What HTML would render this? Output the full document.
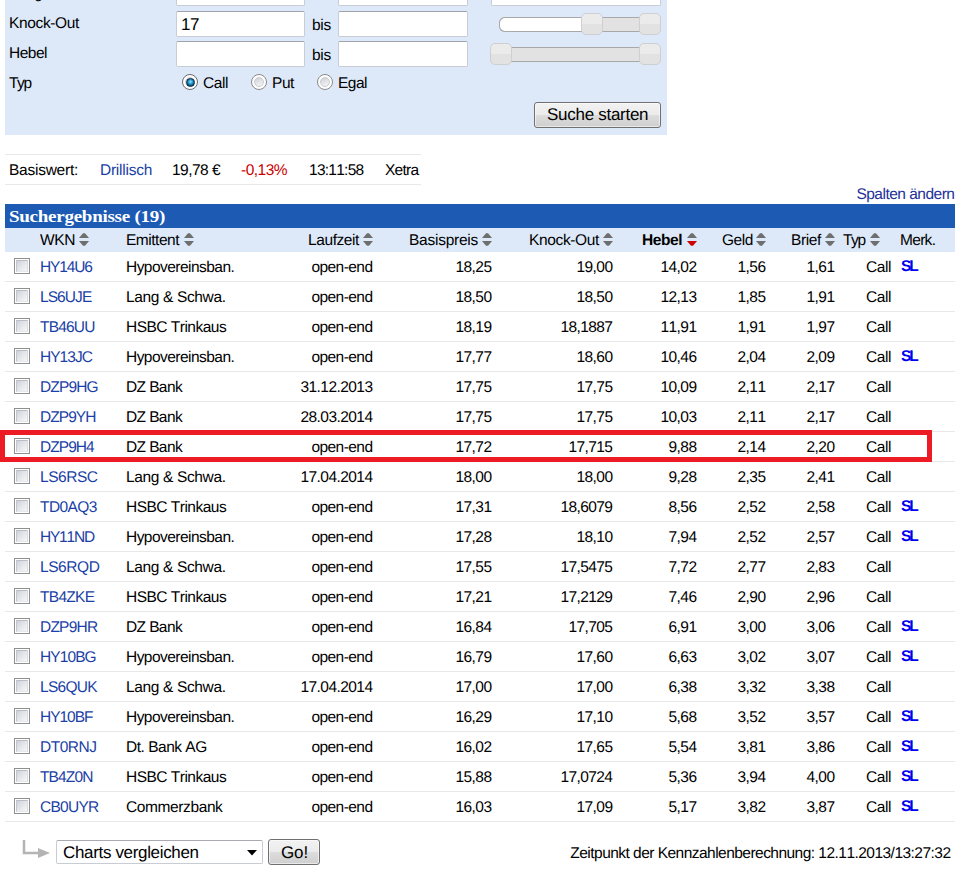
<!DOCTYPE html>
<html><head><meta charset="utf-8"><style>
*{margin:0;padding:0;box-sizing:border-box}
html,body{width:974px;height:887px;overflow:hidden;background:#fff}
body{position:relative;font-family:"Liberation Sans",sans-serif;font-size:15.5px;color:#000;font-kerning:none}
.t{position:absolute;white-space:nowrap;line-height:17px;text-rendering:geometricPrecision}
.b{font-weight:bold}
.lnk{color:#1b3fa6}
.lnk2{color:#23309a}
.red{color:#cc0000}
.sl{color:#0000f0;font-weight:bold}
.panel{position:absolute;left:5px;top:0;width:662px;height:135px;background:#dde9f9}
.inp{position:absolute;background:#fff;border:1px solid #c8ccd4;border-top-color:#a0a4aa;border-radius:2px;box-sizing:content-box}
.trk{position:absolute;border:1px solid #a8a8a8;border-radius:6px;box-sizing:content-box}
.trkw{position:absolute;background:#fff;border:1px solid #a8a8a8;border-right:none;border-radius:6px 0 0 6px;box-sizing:content-box}
.sh{position:absolute;width:22px;height:22px;border:1px solid #cfcfcf;border-radius:5px;background:linear-gradient(#ebebeb 0,#ebebeb 50%,#e2e2e2 50%,#e2e2e2 100%)}
.rad{position:absolute;width:16px;height:16px;border-radius:50%;border:1px solid #8a8a8a;background:#fff}.rad::before{content:'';position:absolute;left:2px;top:2px;width:10px;height:10px;border-radius:50%;box-sizing:border-box;border:1px solid #c9ccd1;background:linear-gradient(160deg,#c9cdd3 0,#e2e3e6 45%,#f6f6f6 100%)}
.rad.on{border-color:#6a6a6a}.rad.on::after{content:'';position:absolute;left:2.5px;top:2.5px;width:9px;height:9px;border-radius:50%;box-sizing:border-box;border:1.5px solid #0a2c48;background:radial-gradient(circle at 50% 40%,#9ae6fc 0,#3fb0e0 1.5px,#1474aa 3px,#0d4a75 4px)}
.btn{position:absolute;border:1px solid #707070;border-radius:3px;box-shadow:inset 0 0 0 1px rgba(255,255,255,.55);background:linear-gradient(#f2f2f2 0,#ebebeb 50%,#dddddd 50%,#cfcfcf 100%);box-sizing:content-box}
.hl{position:absolute;height:1px;background:#e8e8e8}
.bar{position:absolute;left:5px;top:204px;width:950px;height:24px;background:#1c5ab4}
.title{position:absolute;font-family:"Liberation Serif",serif;font-weight:bold;font-size:17px;color:#fff;line-height:18px;white-space:nowrap;letter-spacing:-0.25px;transform:scaleX(1.12);transform-origin:0 0}
.hdr{position:absolute;left:5px;top:228px;width:950px;height:24px;background:#dde9f9}
.si{position:absolute}
.cb{position:absolute;width:16px;height:16px;border:1px solid #8e8f8f;background:#fff;padding:1px}
.cbi{width:12px;height:12px;border:1px solid;border-color:#b9bec6 #d8dbe0 #e6e8eb #c4c8ce;background:linear-gradient(135deg,#cfd3da 0,#e4e6ea 50%,#f6f6f7 100%)}
.redbox{position:absolute;left:0;top:430px;width:932px;height:32px;border:5px solid #ed1c24}
.arr{position:absolute}
.sel{position:absolute;background:#fff;border:1px solid #c8ccd4;border-top-color:#a8acb2;border-radius:2px;box-sizing:content-box}
</style></head>
<body>
<div class="panel"></div>
<div class="inp" style="left:176px;top:-19px;width:127px;height:23px"></div>
<div class="inp" style="left:338px;top:-19px;width:128px;height:23px"></div>
<div class="inp" style="left:491px;top:-19px;width:168px;height:23px"></div>
<div class="t " style="left:9px;top:-15px;letter-spacing:-0.456px;">Ausgabe</div>
<div class="t " style="left:9px;top:15px;letter-spacing:-0.355px;">Knock-Out</div>
<div class="inp" style="left:176px;top:11px;width:127px;height:24px"></div>
<div class="t " style="left:181px;top:16px;letter-spacing:-0.455px;font-size:17px;">17</div>
<div class="t " style="left:312px;top:17px;letter-spacing:-0.271px;">bis</div>
<div class="inp" style="left:338px;top:11px;width:128px;height:24px"></div>
<div class="trk" style="left:499px;top:17px;width:150px;height:13px;background:#e2e2e2"></div>
<div class="trkw" style="left:499px;top:17px;width:90px;height:13px"></div>
<div class="sh" style="left:581px;top:13px"></div>
<div class="sh" style="left:639px;top:13px"></div>
<div class="t " style="left:9px;top:45px;letter-spacing:-0.497px;">Hebel</div>
<div class="inp" style="left:176px;top:41px;width:127px;height:24px"></div>
<div class="t " style="left:312px;top:47px;letter-spacing:-0.271px;">bis</div>
<div class="inp" style="left:338px;top:41px;width:128px;height:24px"></div>
<div class="trk" style="left:505px;top:47px;width:140px;height:13px;background:#e2e2e2"></div>
<div class="sh" style="left:490px;top:43px"></div>
<div class="sh" style="left:639px;top:43px"></div>
<div class="t " style="left:9px;top:75px;letter-spacing:-1.370px;">Typ</div>
<div class="rad on" style="left:182px;top:74px"></div>
<div class="t " style="left:203px;top:75px;letter-spacing:-0.425px;">Call</div>
<div class="rad" style="left:251px;top:74px"></div>
<div class="t " style="left:272px;top:75px;letter-spacing:-0.422px;">Put</div>
<div class="rad" style="left:317px;top:74px"></div>
<div class="t " style="left:338px;top:75px;letter-spacing:-0.506px;">Egal</div>
<div class="btn" style="left:534px;top:102px;width:125px;height:24px"></div>
<div class="t " style="left:547px;top:106px;letter-spacing:-0.277px;font-size:17px;">Suche starten</div>
<div class="hl" style="left:5px;top:154px;width:416px"></div>
<div class="hl" style="left:5px;top:184px;width:416px"></div>
<div class="t " style="left:9px;top:162px;letter-spacing:-0.249px;">Basiswert:</div>
<div class="t lnk" style="left:100px;top:162px;letter-spacing:-0.250px;">Drillisch</div>
<div class="t " style="left:172px;top:162px;letter-spacing:-0.531px;">19,78 €</div>
<div class="t red" style="left:241px;top:162px;letter-spacing:-0.519px;">-0,13%</div>
<div class="t " style="left:309px;top:162px;letter-spacing:-0.740px;">13:11:58</div>
<div class="t " style="left:385px;top:162px;letter-spacing:-0.725px;">Xetra</div>
<div class="t lnk2" style="right:19.50px;top:186px;letter-spacing:-0.502px;">Spalten ändern</div>
<div class="bar"></div>
<div class="title" style="left:9px;top:208px">Suchergebnisse (19)</div>
<div class="hdr"></div>
<div class="t " style="left:40px;top:232px;letter-spacing:-0.387px;">WKN</div>
<svg class="si" style="left:79px;top:233px" width="10" height="13" viewBox="0 0 10 13"><path d="M4 0.2 L6 0.2 L10 5 L0 5 Z" fill="#6e6e6e"/><path d="M0 8 L10 8 L6 12.8 L4 12.8 Z" fill="#6e6e6e"/></svg>
<div class="t " style="left:126px;top:232px;letter-spacing:-0.482px;">Emittent</div>
<svg class="si" style="left:184px;top:233px" width="10" height="13" viewBox="0 0 10 13"><path d="M4 0.2 L6 0.2 L10 5 L0 5 Z" fill="#6e6e6e"/><path d="M0 8 L10 8 L6 12.8 L4 12.8 Z" fill="#6e6e6e"/></svg>
<div class="t " style="left:308px;top:232px;letter-spacing:-0.411px;">Laufzeit</div>
<svg class="si" style="left:363px;top:233px" width="10" height="13" viewBox="0 0 10 13"><path d="M4 0.2 L6 0.2 L10 5 L0 5 Z" fill="#6e6e6e"/><path d="M0 8 L10 8 L6 12.8 L4 12.8 Z" fill="#6e6e6e"/></svg>
<div class="t " style="left:409px;top:232px;letter-spacing:-0.250px;">Basispreis</div>
<svg class="si" style="left:482px;top:233px" width="10" height="13" viewBox="0 0 10 13"><path d="M4 0.2 L6 0.2 L10 5 L0 5 Z" fill="#6e6e6e"/><path d="M0 8 L10 8 L6 12.8 L4 12.8 Z" fill="#6e6e6e"/></svg>
<div class="t " style="left:529px;top:232px;letter-spacing:-0.355px;">Knock-Out</div>
<svg class="si" style="left:603px;top:233px" width="10" height="13" viewBox="0 0 10 13"><path d="M4 0.2 L6 0.2 L10 5 L0 5 Z" fill="#6e6e6e"/><path d="M0 8 L10 8 L6 12.8 L4 12.8 Z" fill="#6e6e6e"/></svg>
<div class="t b" style="left:642px;top:232px;letter-spacing:-0.442px;">Hebel</div>
<svg class="si" style="left:687px;top:233px" width="10" height="13" viewBox="0 0 10 13"><path d="M4 0.2 L6 0.2 L10 5 L0 5 Z" fill="#6e6e6e"/><path d="M0 8 L10 8 L6 12.8 L4 12.8 Z" fill="#cc0000"/></svg>
<div class="t " style="left:722px;top:232px;letter-spacing:-0.435px;">Geld</div>
<svg class="si" style="left:756px;top:233px" width="10" height="13" viewBox="0 0 10 13"><path d="M4 0.2 L6 0.2 L10 5 L0 5 Z" fill="#6e6e6e"/><path d="M0 8 L10 8 L6 12.8 L4 12.8 Z" fill="#6e6e6e"/></svg>
<div class="t " style="left:791px;top:232px;letter-spacing:-0.374px;">Brief</div>
<svg class="si" style="left:825px;top:233px" width="10" height="13" viewBox="0 0 10 13"><path d="M4 0.2 L6 0.2 L10 5 L0 5 Z" fill="#6e6e6e"/><path d="M0 8 L10 8 L6 12.8 L4 12.8 Z" fill="#6e6e6e"/></svg>
<div class="t " style="left:843px;top:232px;letter-spacing:-1.370px;">Typ</div>
<svg class="si" style="left:870px;top:233px" width="10" height="13" viewBox="0 0 10 13"><path d="M4 0.2 L6 0.2 L10 5 L0 5 Z" fill="#6e6e6e"/><path d="M0 8 L10 8 L6 12.8 L4 12.8 Z" fill="#6e6e6e"/></svg>
<div class="t " style="left:900px;top:232px;letter-spacing:-0.691px;">Merk.</div>
<div class="cb" style="left:14px;top:258px"><div class="cbi"></div></div>
<div class="t lnk" style="left:40px;top:259px;letter-spacing:-1.121px;">HY14U6</div>
<div class="t " style="left:126px;top:259px;letter-spacing:-0.538px;">Hypovereinsban.</div>
<div class="t " style="right:601.56px;top:259px;letter-spacing:-0.563px;">open-end</div>
<div class="t " style="right:482.56px;top:259px;letter-spacing:-0.558px;">18,25</div>
<div class="t " style="right:361.56px;top:259px;letter-spacing:-0.558px;">19,00</div>
<div class="t " style="right:277.56px;top:259px;letter-spacing:-0.558px;">14,02</div>
<div class="t " style="right:208.54px;top:259px;letter-spacing:-0.542px;">1,56</div>
<div class="t " style="right:139.54px;top:259px;letter-spacing:-0.542px;">1,61</div>
<div class="t " style="left:866px;top:259px;letter-spacing:-0.425px;">Call</div>
<div class="t sl" style="left:901px;top:258px;letter-spacing:-1.983px;">SL</div>
<div class="hl" style="left:5px;top:281px;width:950px"></div>
<div class="cb" style="left:14px;top:288px"><div class="cbi"></div></div>
<div class="t lnk" style="left:40px;top:289px;letter-spacing:-0.919px;">LS6UJE</div>
<div class="t " style="left:126px;top:289px;letter-spacing:-0.356px;">Lang &amp; Schwa.</div>
<div class="t " style="right:601.56px;top:289px;letter-spacing:-0.563px;">open-end</div>
<div class="t " style="right:482.56px;top:289px;letter-spacing:-0.558px;">18,50</div>
<div class="t " style="right:361.56px;top:289px;letter-spacing:-0.558px;">18,50</div>
<div class="t " style="right:277.56px;top:289px;letter-spacing:-0.558px;">12,13</div>
<div class="t " style="right:208.54px;top:289px;letter-spacing:-0.542px;">1,85</div>
<div class="t " style="right:139.54px;top:289px;letter-spacing:-0.542px;">1,91</div>
<div class="t " style="left:866px;top:289px;letter-spacing:-0.425px;">Call</div>
<div class="hl" style="left:5px;top:311px;width:950px"></div>
<div class="cb" style="left:14px;top:318px"><div class="cbi"></div></div>
<div class="t lnk" style="left:40px;top:319px;letter-spacing:-0.808px;">TB46UU</div>
<div class="t " style="left:126px;top:319px;letter-spacing:-0.514px;">HSBC Trinkaus</div>
<div class="t " style="right:601.56px;top:319px;letter-spacing:-0.563px;">open-end</div>
<div class="t " style="right:482.56px;top:319px;letter-spacing:-0.558px;">18,19</div>
<div class="t " style="right:361.58px;top:319px;letter-spacing:-0.576px;">18,1887</div>
<div class="t " style="right:277.56px;top:319px;letter-spacing:-0.558px;">11,91</div>
<div class="t " style="right:208.54px;top:319px;letter-spacing:-0.542px;">1,91</div>
<div class="t " style="right:139.54px;top:319px;letter-spacing:-0.542px;">1,97</div>
<div class="t " style="left:866px;top:319px;letter-spacing:-0.425px;">Call</div>
<div class="hl" style="left:5px;top:341px;width:950px"></div>
<div class="cb" style="left:14px;top:348px"><div class="cbi"></div></div>
<div class="t lnk" style="left:40px;top:349px;letter-spacing:-0.965px;">HY13JC</div>
<div class="t " style="left:126px;top:349px;letter-spacing:-0.538px;">Hypovereinsban.</div>
<div class="t " style="right:601.56px;top:349px;letter-spacing:-0.563px;">open-end</div>
<div class="t " style="right:482.56px;top:349px;letter-spacing:-0.558px;">17,77</div>
<div class="t " style="right:361.56px;top:349px;letter-spacing:-0.558px;">18,60</div>
<div class="t " style="right:277.56px;top:349px;letter-spacing:-0.558px;">10,46</div>
<div class="t " style="right:208.54px;top:349px;letter-spacing:-0.542px;">2,04</div>
<div class="t " style="right:139.54px;top:349px;letter-spacing:-0.542px;">2,09</div>
<div class="t " style="left:866px;top:349px;letter-spacing:-0.425px;">Call</div>
<div class="t sl" style="left:901px;top:348px;letter-spacing:-1.983px;">SL</div>
<div class="hl" style="left:5px;top:371px;width:950px"></div>
<div class="cb" style="left:14px;top:378px"><div class="cbi"></div></div>
<div class="t lnk" style="left:40px;top:379px;letter-spacing:-0.862px;">DZP9HG</div>
<div class="t " style="left:126px;top:379px;letter-spacing:-0.608px;">DZ Bank</div>
<div class="t " style="right:601.56px;top:379px;letter-spacing:-0.558px;">31.12.2013</div>
<div class="t " style="right:482.56px;top:379px;letter-spacing:-0.558px;">17,75</div>
<div class="t " style="right:361.56px;top:379px;letter-spacing:-0.558px;">17,75</div>
<div class="t " style="right:277.56px;top:379px;letter-spacing:-0.558px;">10,09</div>
<div class="t " style="right:208.54px;top:379px;letter-spacing:-0.542px;">2,11</div>
<div class="t " style="right:139.54px;top:379px;letter-spacing:-0.542px;">2,17</div>
<div class="t " style="left:866px;top:379px;letter-spacing:-0.425px;">Call</div>
<div class="hl" style="left:5px;top:401px;width:950px"></div>
<div class="cb" style="left:14px;top:408px"><div class="cbi"></div></div>
<div class="t lnk" style="left:40px;top:409px;letter-spacing:-0.958px;">DZP9YH</div>
<div class="t " style="left:126px;top:409px;letter-spacing:-0.608px;">DZ Bank</div>
<div class="t " style="right:601.56px;top:409px;letter-spacing:-0.558px;">28.03.2014</div>
<div class="t " style="right:482.56px;top:409px;letter-spacing:-0.558px;">17,75</div>
<div class="t " style="right:361.56px;top:409px;letter-spacing:-0.558px;">17,75</div>
<div class="t " style="right:277.56px;top:409px;letter-spacing:-0.558px;">10,03</div>
<div class="t " style="right:208.54px;top:409px;letter-spacing:-0.542px;">2,11</div>
<div class="t " style="right:139.54px;top:409px;letter-spacing:-0.542px;">2,17</div>
<div class="t " style="left:866px;top:409px;letter-spacing:-0.425px;">Call</div>
<div class="hl" style="left:5px;top:431px;width:950px"></div>
<div class="cb" style="left:14px;top:438px"><div class="cbi"></div></div>
<div class="t lnk" style="left:40px;top:439px;letter-spacing:-0.956px;">DZP9H4</div>
<div class="t " style="left:126px;top:439px;letter-spacing:-0.608px;">DZ Bank</div>
<div class="t " style="right:601.56px;top:439px;letter-spacing:-0.563px;">open-end</div>
<div class="t " style="right:482.56px;top:439px;letter-spacing:-0.558px;">17,72</div>
<div class="t " style="right:361.57px;top:439px;letter-spacing:-0.568px;">17,715</div>
<div class="t " style="right:277.54px;top:439px;letter-spacing:-0.542px;">9,88</div>
<div class="t " style="right:208.54px;top:439px;letter-spacing:-0.542px;">2,14</div>
<div class="t " style="right:139.54px;top:439px;letter-spacing:-0.542px;">2,20</div>
<div class="t " style="left:866px;top:439px;letter-spacing:-0.425px;">Call</div>
<div class="hl" style="left:5px;top:461px;width:950px"></div>
<div class="cb" style="left:14px;top:468px"><div class="cbi"></div></div>
<div class="t lnk" style="left:40px;top:469px;letter-spacing:-0.463px;">LS6RSC</div>
<div class="t " style="left:126px;top:469px;letter-spacing:-0.356px;">Lang &amp; Schwa.</div>
<div class="t " style="right:601.56px;top:469px;letter-spacing:-0.558px;">17.04.2014</div>
<div class="t " style="right:482.56px;top:469px;letter-spacing:-0.558px;">18,00</div>
<div class="t " style="right:361.56px;top:469px;letter-spacing:-0.558px;">18,00</div>
<div class="t " style="right:277.54px;top:469px;letter-spacing:-0.542px;">9,28</div>
<div class="t " style="right:208.54px;top:469px;letter-spacing:-0.542px;">2,35</div>
<div class="t " style="right:139.54px;top:469px;letter-spacing:-0.542px;">2,41</div>
<div class="t " style="left:866px;top:469px;letter-spacing:-0.425px;">Call</div>
<div class="hl" style="left:5px;top:491px;width:950px"></div>
<div class="cb" style="left:14px;top:498px"><div class="cbi"></div></div>
<div class="t lnk" style="left:40px;top:499px;letter-spacing:-0.583px;">TD0AQ3</div>
<div class="t " style="left:126px;top:499px;letter-spacing:-0.514px;">HSBC Trinkaus</div>
<div class="t " style="right:601.56px;top:499px;letter-spacing:-0.563px;">open-end</div>
<div class="t " style="right:482.56px;top:499px;letter-spacing:-0.558px;">17,31</div>
<div class="t " style="right:361.58px;top:499px;letter-spacing:-0.576px;">18,6079</div>
<div class="t " style="right:277.54px;top:499px;letter-spacing:-0.542px;">8,56</div>
<div class="t " style="right:208.54px;top:499px;letter-spacing:-0.542px;">2,52</div>
<div class="t " style="right:139.54px;top:499px;letter-spacing:-0.542px;">2,58</div>
<div class="t " style="left:866px;top:499px;letter-spacing:-0.425px;">Call</div>
<div class="t sl" style="left:901px;top:498px;letter-spacing:-1.983px;">SL</div>
<div class="hl" style="left:5px;top:521px;width:950px"></div>
<div class="cb" style="left:14px;top:528px"><div class="cbi"></div></div>
<div class="t lnk" style="left:40px;top:529px;letter-spacing:-1.204px;">HY11ND</div>
<div class="t " style="left:126px;top:529px;letter-spacing:-0.538px;">Hypovereinsban.</div>
<div class="t " style="right:601.56px;top:529px;letter-spacing:-0.563px;">open-end</div>
<div class="t " style="right:482.56px;top:529px;letter-spacing:-0.558px;">17,28</div>
<div class="t " style="right:361.56px;top:529px;letter-spacing:-0.558px;">18,10</div>
<div class="t " style="right:277.54px;top:529px;letter-spacing:-0.542px;">7,94</div>
<div class="t " style="right:208.54px;top:529px;letter-spacing:-0.542px;">2,52</div>
<div class="t " style="right:139.54px;top:529px;letter-spacing:-0.542px;">2,57</div>
<div class="t " style="left:866px;top:529px;letter-spacing:-0.425px;">Call</div>
<div class="t sl" style="left:901px;top:528px;letter-spacing:-1.983px;">SL</div>
<div class="hl" style="left:5px;top:551px;width:950px"></div>
<div class="cb" style="left:14px;top:558px"><div class="cbi"></div></div>
<div class="t lnk" style="left:40px;top:559px;letter-spacing:-0.436px;">LS6RQD</div>
<div class="t " style="left:126px;top:559px;letter-spacing:-0.356px;">Lang &amp; Schwa.</div>
<div class="t " style="right:601.56px;top:559px;letter-spacing:-0.563px;">open-end</div>
<div class="t " style="right:482.56px;top:559px;letter-spacing:-0.558px;">17,55</div>
<div class="t " style="right:361.58px;top:559px;letter-spacing:-0.576px;">17,5475</div>
<div class="t " style="right:277.54px;top:559px;letter-spacing:-0.542px;">7,72</div>
<div class="t " style="right:208.54px;top:559px;letter-spacing:-0.542px;">2,77</div>
<div class="t " style="right:139.54px;top:559px;letter-spacing:-0.542px;">2,83</div>
<div class="t " style="left:866px;top:559px;letter-spacing:-0.425px;">Call</div>
<div class="hl" style="left:5px;top:581px;width:950px"></div>
<div class="cb" style="left:14px;top:588px"><div class="cbi"></div></div>
<div class="t lnk" style="left:40px;top:589px;letter-spacing:-0.701px;">TB4ZKE</div>
<div class="t " style="left:126px;top:589px;letter-spacing:-0.514px;">HSBC Trinkaus</div>
<div class="t " style="right:601.56px;top:589px;letter-spacing:-0.563px;">open-end</div>
<div class="t " style="right:482.56px;top:589px;letter-spacing:-0.558px;">17,21</div>
<div class="t " style="right:361.58px;top:589px;letter-spacing:-0.576px;">17,2129</div>
<div class="t " style="right:277.54px;top:589px;letter-spacing:-0.542px;">7,46</div>
<div class="t " style="right:208.54px;top:589px;letter-spacing:-0.542px;">2,90</div>
<div class="t " style="right:139.54px;top:589px;letter-spacing:-0.542px;">2,96</div>
<div class="t " style="left:866px;top:589px;letter-spacing:-0.425px;">Call</div>
<div class="hl" style="left:5px;top:611px;width:950px"></div>
<div class="cb" style="left:14px;top:618px"><div class="cbi"></div></div>
<div class="t lnk" style="left:40px;top:619px;letter-spacing:-0.778px;">DZP9HR</div>
<div class="t " style="left:126px;top:619px;letter-spacing:-0.608px;">DZ Bank</div>
<div class="t " style="right:601.56px;top:619px;letter-spacing:-0.563px;">open-end</div>
<div class="t " style="right:482.56px;top:619px;letter-spacing:-0.558px;">16,84</div>
<div class="t " style="right:361.57px;top:619px;letter-spacing:-0.568px;">17,705</div>
<div class="t " style="right:277.54px;top:619px;letter-spacing:-0.542px;">6,91</div>
<div class="t " style="right:208.54px;top:619px;letter-spacing:-0.542px;">3,00</div>
<div class="t " style="right:139.54px;top:619px;letter-spacing:-0.542px;">3,06</div>
<div class="t " style="left:866px;top:619px;letter-spacing:-0.425px;">Call</div>
<div class="t sl" style="left:901px;top:618px;letter-spacing:-1.983px;">SL</div>
<div class="hl" style="left:5px;top:641px;width:950px"></div>
<div class="cb" style="left:14px;top:648px"><div class="cbi"></div></div>
<div class="t lnk" style="left:40px;top:649px;letter-spacing:-0.902px;">HY10BG</div>
<div class="t " style="left:126px;top:649px;letter-spacing:-0.538px;">Hypovereinsban.</div>
<div class="t " style="right:601.56px;top:649px;letter-spacing:-0.563px;">open-end</div>
<div class="t " style="right:482.56px;top:649px;letter-spacing:-0.558px;">16,79</div>
<div class="t " style="right:361.56px;top:649px;letter-spacing:-0.558px;">17,60</div>
<div class="t " style="right:277.54px;top:649px;letter-spacing:-0.542px;">6,63</div>
<div class="t " style="right:208.54px;top:649px;letter-spacing:-0.542px;">3,02</div>
<div class="t " style="right:139.54px;top:649px;letter-spacing:-0.542px;">3,07</div>
<div class="t " style="left:866px;top:649px;letter-spacing:-0.425px;">Call</div>
<div class="t sl" style="left:901px;top:648px;letter-spacing:-1.983px;">SL</div>
<div class="hl" style="left:5px;top:671px;width:950px"></div>
<div class="cb" style="left:14px;top:678px"><div class="cbi"></div></div>
<div class="t lnk" style="left:40px;top:679px;letter-spacing:-0.699px;">LS6QUK</div>
<div class="t " style="left:126px;top:679px;letter-spacing:-0.356px;">Lang &amp; Schwa.</div>
<div class="t " style="right:601.56px;top:679px;letter-spacing:-0.558px;">17.04.2014</div>
<div class="t " style="right:482.56px;top:679px;letter-spacing:-0.558px;">17,00</div>
<div class="t " style="right:361.56px;top:679px;letter-spacing:-0.558px;">17,00</div>
<div class="t " style="right:277.54px;top:679px;letter-spacing:-0.542px;">6,38</div>
<div class="t " style="right:208.54px;top:679px;letter-spacing:-0.542px;">3,32</div>
<div class="t " style="right:139.54px;top:679px;letter-spacing:-0.542px;">3,38</div>
<div class="t " style="left:866px;top:679px;letter-spacing:-0.425px;">Call</div>
<div class="hl" style="left:5px;top:701px;width:950px"></div>
<div class="cb" style="left:14px;top:708px"><div class="cbi"></div></div>
<div class="t lnk" style="left:40px;top:709px;letter-spacing:-1.012px;">HY10BF</div>
<div class="t " style="left:126px;top:709px;letter-spacing:-0.538px;">Hypovereinsban.</div>
<div class="t " style="right:601.56px;top:709px;letter-spacing:-0.563px;">open-end</div>
<div class="t " style="right:482.56px;top:709px;letter-spacing:-0.558px;">16,29</div>
<div class="t " style="right:361.56px;top:709px;letter-spacing:-0.558px;">17,10</div>
<div class="t " style="right:277.54px;top:709px;letter-spacing:-0.542px;">5,68</div>
<div class="t " style="right:208.54px;top:709px;letter-spacing:-0.542px;">3,52</div>
<div class="t " style="right:139.54px;top:709px;letter-spacing:-0.542px;">3,57</div>
<div class="t " style="left:866px;top:709px;letter-spacing:-0.425px;">Call</div>
<div class="t sl" style="left:901px;top:708px;letter-spacing:-1.983px;">SL</div>
<div class="hl" style="left:5px;top:731px;width:950px"></div>
<div class="cb" style="left:14px;top:738px"><div class="cbi"></div></div>
<div class="t lnk" style="left:40px;top:739px;letter-spacing:-0.494px;">DT0RNJ</div>
<div class="t " style="left:126px;top:739px;letter-spacing:-0.491px;">Dt. Bank AG</div>
<div class="t " style="right:601.56px;top:739px;letter-spacing:-0.563px;">open-end</div>
<div class="t " style="right:482.56px;top:739px;letter-spacing:-0.558px;">16,02</div>
<div class="t " style="right:361.56px;top:739px;letter-spacing:-0.558px;">17,65</div>
<div class="t " style="right:277.54px;top:739px;letter-spacing:-0.542px;">5,54</div>
<div class="t " style="right:208.54px;top:739px;letter-spacing:-0.542px;">3,81</div>
<div class="t " style="right:139.54px;top:739px;letter-spacing:-0.542px;">3,86</div>
<div class="t " style="left:866px;top:739px;letter-spacing:-0.425px;">Call</div>
<div class="t sl" style="left:901px;top:738px;letter-spacing:-1.983px;">SL</div>
<div class="hl" style="left:5px;top:761px;width:950px"></div>
<div class="cb" style="left:14px;top:768px"><div class="cbi"></div></div>
<div class="t lnk" style="left:40px;top:769px;letter-spacing:-0.869px;">TB4Z0N</div>
<div class="t " style="left:126px;top:769px;letter-spacing:-0.514px;">HSBC Trinkaus</div>
<div class="t " style="right:601.56px;top:769px;letter-spacing:-0.563px;">open-end</div>
<div class="t " style="right:482.56px;top:769px;letter-spacing:-0.558px;">15,88</div>
<div class="t " style="right:361.58px;top:769px;letter-spacing:-0.576px;">17,0724</div>
<div class="t " style="right:277.54px;top:769px;letter-spacing:-0.542px;">5,36</div>
<div class="t " style="right:208.54px;top:769px;letter-spacing:-0.542px;">3,94</div>
<div class="t " style="right:139.54px;top:769px;letter-spacing:-0.542px;">4,00</div>
<div class="t " style="left:866px;top:769px;letter-spacing:-0.425px;">Call</div>
<div class="t sl" style="left:901px;top:768px;letter-spacing:-1.983px;">SL</div>
<div class="hl" style="left:5px;top:791px;width:950px"></div>
<div class="cb" style="left:14px;top:798px"><div class="cbi"></div></div>
<div class="t lnk" style="left:40px;top:799px;letter-spacing:-0.732px;">CB0UYR</div>
<div class="t " style="left:126px;top:799px;letter-spacing:-0.392px;">Commerzbank</div>
<div class="t " style="right:601.56px;top:799px;letter-spacing:-0.563px;">open-end</div>
<div class="t " style="right:482.56px;top:799px;letter-spacing:-0.558px;">16,03</div>
<div class="t " style="right:361.56px;top:799px;letter-spacing:-0.558px;">17,09</div>
<div class="t " style="right:277.54px;top:799px;letter-spacing:-0.542px;">5,17</div>
<div class="t " style="right:208.54px;top:799px;letter-spacing:-0.542px;">3,82</div>
<div class="t " style="right:139.54px;top:799px;letter-spacing:-0.542px;">3,87</div>
<div class="t " style="left:866px;top:799px;letter-spacing:-0.425px;">Call</div>
<div class="t sl" style="left:901px;top:798px;letter-spacing:-1.983px;">SL</div>
<div class="hl" style="left:5px;top:821px;width:950px"></div>
<div class="redbox"></div>
<svg class="arr" style="left:20px;top:837px" width="34" height="26" viewBox="0 0 34 26"><path d="M4 3 V16 H19" stroke="#b4b4b4" stroke-width="2.5" fill="none"/><path d="M18 11 L30 16 L18 21 Z" fill="#b4b4b4"/></svg>
<div class="sel" style="left:56px;top:840px;width:205px;height:22px"></div>
<div class="t " style="left:63px;top:844px;letter-spacing:-0.339px;font-size:17px;">Charts vergleichen</div>
<svg style="position:absolute;left:247px;top:850px" width="10" height="6" viewBox="0 0 10 6"><path d="M0 0 H10 L5 5.5 Z" fill="#000"/></svg>
<div class="btn" style="left:268px;top:839px;width:50px;height:24px"></div>
<div class="t " style="left:281px;top:844px;letter-spacing:-0.134px;font-size:17px;">Go!</div>
<div class="t " style="right:23.53px;top:845px;letter-spacing:-0.531px;">Zeitpunkt der Kennzahlenberechnung: 12.11.2013/13:27:32</div>
</body></html>
